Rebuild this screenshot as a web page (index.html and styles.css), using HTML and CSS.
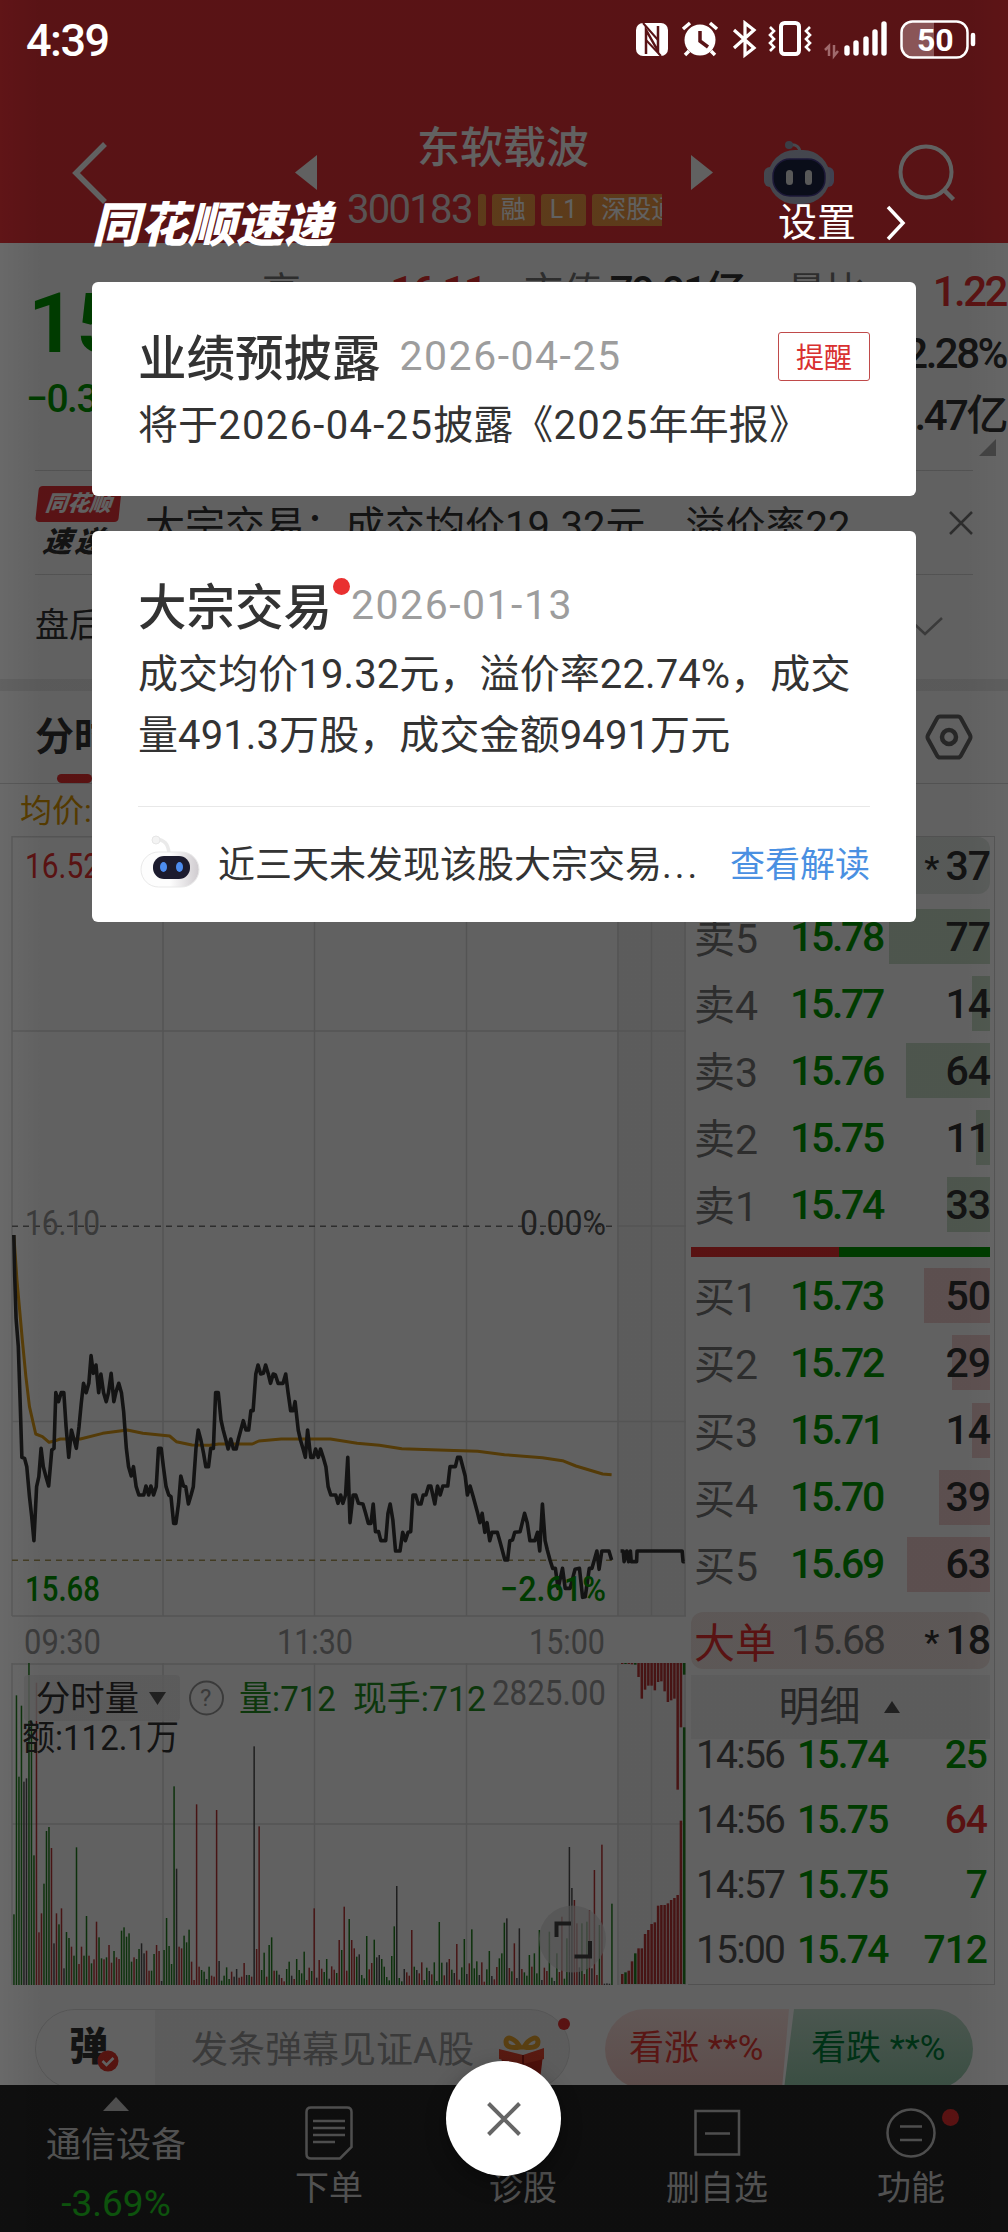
FILE: index.html
```html
<!DOCTYPE html>
<html lang="zh-CN">
<head>
<meta charset="UTF-8">
<meta name="viewport" content="width=device-width, initial-scale=1.0">
<title>东软载波 300183</title>
<link rel="stylesheet" href="styles.css">
</head>
<body>
<div class="page">
    <header class="header">
        <svg class="back" width="38" height="62" viewBox="0 0 38 62"><path d="M34 2L5 31l29 29" fill="none" stroke="#fff" stroke-width="5.5"/></svg>
        <svg class="prev" width="22" height="35" viewBox="0 0 22 35"><path d="M22 0v35L0 17.500z" fill="#fff"/></svg>
        <div class="stock">
            <div class="stock-name">东软载波</div>
            <div class="stock-code"><span class="code">300183</span><i class="tag tag-thin"></i><i class="tag">融</i><i class="tag">L1</i><i class="tag">深股通</i></div>
        </div>
        <svg class="next" width="22" height="35" viewBox="0 0 22 35"><path d="M0 0v35l22-17.500z" fill="#fff"/></svg>
        <svg class="robot" width="70" height="64" viewBox="0 0 70 64">
            <path d="M26 4c6-1 10 2 10 8" fill="none" stroke="#b9c0d0" stroke-width="3"/>
            <circle cx="25" cy="4" r="4" fill="#9aa3b8"/>
            <rect x="0" y="26" width="12" height="20" rx="6" fill="#b4bace"/>
            <rect x="58" y="26" width="12" height="20" rx="6" fill="#a9acd4"/>
            <rect x="4" y="9" width="62" height="54" rx="27" fill="#b3b9cc"/>
            <rect x="9" y="18" width="52" height="37" rx="17" fill="#1a2142" stroke="#4a3f93" stroke-width="1.500"/>
            <rect x="22" y="29" width="7" height="15" rx="3.500" fill="#e8e8e8"/>
            <rect x="41" y="29" width="7" height="15" rx="3.500" fill="#e8e8e8"/>
        </svg>
        <svg class="search" width="60" height="60" viewBox="0 0 60 60"><circle cx="28" cy="29" r="25.500" fill="none" stroke="#fff" stroke-width="4"/><path d="M46 47l9.500 9.500" stroke="#fff" stroke-width="4.500"/></svg>
    </header>

    <section class="quote">
        <div class="price-box">
            <div class="price">15.76</div>
            <div class="change">−0.34</div>
        </div>
        <div class="stats">
            <span>高</span><b class="red">16.11</b>
            <span class="c3">市值</span><b>79.91亿</b>
            <span class="c5">量比</span><b class="red">1.22</b>
            <b class="last">2.28%</b>
            <b class="last">3.47亿</b>
        </div>
        <i class="corner"></i>
    </section>

    <section class="news">
        <div class="news-logo"><b>同花顺</b><em>速递</em></div>
        <div class="news-text">大宗交易：成交均价19.32元，溢价率22</div>
        <svg width="24" height="24" viewBox="0 0 24 24"><path d="M1 1l22 22M23 1L1 23" stroke="#777" stroke-width="2.500"/></svg>
    </section>
    <section class="after">
        <span>盘后</span>
        <svg width="36" height="20" viewBox="0 0 36 20"><path d="M1 1l17 16L35 1" fill="none" stroke="#999" stroke-width="2.500"/></svg>
    </section>
    <section class="tabs">
        <span class="tab">分时</span>
        <svg width="48" height="46" viewBox="0 0 48 46" fill="none" stroke="#666"><path d="M15 2.500h18q2 0 3 2L45 21q1 2 0 4l-9 16.500q-1 2-3 2H15q-2 0-3-2L3 25q-1-2 0-4l9-16.500q1-2 3-2z" stroke-width="4"/><circle cx="24" cy="23" r="7" stroke-width="4.500"/></svg>
    </section>
    <div class="avg">均价:</div>

    <main class="main">
        <svg class="chart" width="688" height="1149" viewBox="0 836 688 1149">
            <rect x="617" y="836" width="69" height="780" fill="#f2f2f2"/>
            <rect x="617" y="1663" width="69" height="322" fill="#f2f2f2"/>
            <g fill="none" stroke="#dcdcdc" stroke-width="1.500">
                <path d="M12 836.700h674M12 1031h674M617 1226h69M12 1421.500h674M12 1616h674M12 1664h674M12 1824h674"/>
                <path d="M12 836v780M163 836v780M314.500 836v780M466.500 836v780M618 836v780M651.500 836v780M685 836v780"/>
                <path d="M12 1663v322M163 1663v322M314.500 1663v322M466.500 1663v322M618 1663v322M651.500 1663v322M685 1663v322"/>
            </g>
            <path d="M12 1226.300h605" stroke="#777" stroke-width="1.500" stroke-dasharray="6 5"/>
            <path d="M12 1560.300h605" stroke="#ac9a5c" stroke-width="1.500" stroke-dasharray="6 5"/>
            <g class="lines" transform="translate(0 1200) scale(.44643 .33333)">
                <polyline class="line-avg" points="31,105 38,240 44,330 50,420 58,530 66,620 80,702 95,710 110,727 120,724 135,717 180,717 230,700 285,690 320,700 380,708 395,725 430,735 470,736 490,732 565,732 580,723 630,717 740,717 800,730 850,736 900,746 1000,751 1070,754 1130,764 1215,773 1260,782 1290,798 1350,822 1370,824"/>
                <polyline class="line-price" points="31,105 33,230 36,355 41,440 45,600 49,772 55,775 60,800 66,890 71,950 76,1022 82,860 87,830 92,745 97,800 103,830 109,858 116,750 121,745 125,578 131,605 137,578 143,578 148,680 154,772 160,690 166,720 171,745 177,680 182,610 187,550 193,578 199,550 204,467 209,520 215,495 221,578 226,522 232,578 238,605 243,578 249,520 255,605 260,575 266,550 272,578 277,635 283,745 288,800 294,828 299,800 305,860 311,885 322,885 327,858 333,885 338,858 344,885 350,860 355,745 361,745 366,800 372,860 378,885 383,890 389,970 394,970 400,910 405,828 411,858 416,860 422,912 428,885 433,860 439,745 444,690 450,720 456,760 461,800 467,800 472,745 478,745 483,578 489,578 495,660 500,690 506,720 511,747 517,717 523,747 529,747 534,717 545,662 551,690 557,690 562,632 567,632 573,522 578,495 584,522 590,520 595,495 601,522 606,550 612,522 617,525 623,550 634,550 640,522 645,575 651,632 657,632 661,605 668,690 673,720 679,747 684,772 689,690 696,772 702,772 707,747 713,772 718,747 724,772 730,800 735,860 741,885 752,885 757,910 763,885 768,910 774,885 779,772 784,968 791,885 797,885 803,910 813,912 819,940 825,970 831,970 836,912 841,995 848,995 853,1022 864,1022 869,940 874,912 880,960 886,1053 896,1053 902,997 908,1022 914,997 920,995 925,885 931,885 937,912 943,912 948,885 954,885 960,858 965,858 974,912 980,858 986,885 992,858 1003,858 1008,800 1020,800 1025,772 1031,772 1042,828 1047,885 1053,858 1060,890 1070,940 1075,968 1080,940 1086,997 1091,968 1097,1022 1102,997 1114,997 1120,1025 1131,1080 1137,1080 1142,1022 1148,1020 1153,997 1165,995 1175,940 1181,968 1187,1022 1198,1022 1204,997 1209,1053 1215,912 1221,1022 1226,1050 1232,1080 1238,1105 1244,1105 1250,1165 1255,1135 1260,1105 1266,1165 1277,1165 1288,1108 1298,1105 1305,1192 1311,1190 1320,1105 1326,1105 1337,1053 1342,1108 1348,1053 1364,1053 1370,1080"/>
                <polyline class="line-price" points="1390,1053 1396,1053 1398,1085 1404,1053 1408,1085 1412,1053 1414,1085 1426,1085 1427,1053 1528,1053 1530,1085 1534,1085"/>
            </g>
            <g class="label">
                <text class="up" x="25" y="878" textLength="75" lengthAdjust="spacingAndGlyphs">16.52</text>
                <text class="dim" x="25" y="1235" textLength="75" lengthAdjust="spacingAndGlyphs">16.10</text>
                <text class="grey" x="520" y="1235" textLength="86" lengthAdjust="spacingAndGlyphs">0.00%</text>
                <text class="down" x="25" y="1601" textLength="75" lengthAdjust="spacingAndGlyphs">15.68</text>
                <text class="down" x="500" y="1601" textLength="106" lengthAdjust="spacingAndGlyphs">−2.61%</text>
                <text class="dim" x="24" y="1654" textLength="77" lengthAdjust="spacingAndGlyphs">09:30</text>
                <text class="dim" x="277" y="1654" textLength="76" lengthAdjust="spacingAndGlyphs">11:30</text>
                <text class="dim" x="529" y="1654" textLength="76" lengthAdjust="spacingAndGlyphs">15:00</text>
            </g>
            <g id="volume"></g>
            <rect x="24" y="1675" width="156" height="46" rx="4" fill="#ececec" fill-opacity=".8"/>
            <path d="M149 1692h17l-8.500 13z" fill="#555"/>
            <circle cx="206.500" cy="1698" r="16.500" fill="none" stroke="#999" stroke-width="2"/>
            <g class="label">
                <text class="ink" x="36" y="1711" textLength="103" lengthAdjust="spacingAndGlyphs">分时量</text>
                <text class="dim mark" x="200" y="1706">?</text>
                <text class="vol" x="239" y="1711" textLength="97" lengthAdjust="spacingAndGlyphs">量:712</text>
                <text class="vol" x="353" y="1711" textLength="133" lengthAdjust="spacingAndGlyphs">现手:712</text>
                <text class="dim" x="492" y="1705" textLength="114" lengthAdjust="spacingAndGlyphs">2825.00</text>
                <text class="ink" x="22" y="1750" textLength="157" lengthAdjust="spacingAndGlyphs">额:112.1万</text>
            </g>
            <circle cx="572.500" cy="1939" r="33.500" fill="#ddd" fill-opacity=".7"/>
            <path d="M556.500 1937v-13.500H571M590 1941v15.500h-15.500" fill="none" stroke="#444" stroke-width="4"/>
        </svg>

        <aside class="book">
            <div class="big green-bg"><span></span><em></em><b><small>*</small>37</b></div>
            <div class="orders" id="sells"></div>
            <div class="ratio"><i></i></div>
            <div class="orders buys" id="buys"></div>
            <div class="big"><span>大单</span><em>15.68</em><b><small>*</small>18</b></div>
            <div class="detail-head">明细<i></i></div>
            <div class="ticks">
                <div><span>14:56</span><em>15.74</em><b>25</b></div>
                <div><span>14:56</span><em>15.75</em><b class="red">64</b></div>
                <div><span>14:57</span><em>15.75</em><b>7</b></div>
                <div><span>15:00</span><em>15.74</em><b>712</b></div>
            </div>
        </aside>
    </main>

    <section class="danmu">
        <div class="danmu-input">
            <div class="danmu-switch"><b>弹</b><svg width="22" height="22" viewBox="0 0 22 22"><circle cx="11" cy="11" r="10.500" fill="#e0352b"/><path d="M5.500 11l4 4 7-7" fill="none" stroke="#fff" stroke-width="2.500"/></svg></div>
            <div class="danmu-text">发条弹幕见证A股</div>
            <svg class="gift" width="50" height="54" viewBox="0 0 50 54">
                <path d="M4 21h42l-4 33H8z" fill="#c92a1c"/>
                <path d="M2 15l24 6 21-7v11l-21 5L2 25z" fill="#e8452e"/>
                <path d="M26 21v33" stroke="#a01a12" stroke-width="2"/>
                <path d="M23 13c-5-9-14-12-14-5 0 6 8 6 14 5zm4 0c5-9 14-12 14-5 0 6-8 6-14 5z" fill="none" stroke="#e9a52e" stroke-width="5"/>
            </svg>
            <i class="dot"></i>
        </div>
        <div class="vote">
            <div class="vote-up">看涨 **%</div>
            <div class="vote-down">看跌 **%</div>
        </div>
    </section>

    <nav class="nav">
        <div class="nav-item sector">
            <svg width="26" height="14" viewBox="0 0 26 14"><path d="M13 0l13 14H0z" fill="#ccc"/></svg>
            <span>通信设备</span>
            <b>-3.69%</b>
        </div>
        <div class="nav-item">
            <svg width="48" height="54" viewBox="0 0 48 54" fill="none" stroke="#ccc" stroke-width="2.500"><path d="M6 1.500h36q4.500 0 4.500 4.500v35L35 52.500H6Q1.500 52.500 1.500 48V6Q1.500 1.500 6 1.500z"/><path d="M8 15h32M8 22h32M8 29h32M8 36h22"/></svg>
            <span>下单</span>
        </div>
        <div class="nav-item"><svg width="48" height="54"></svg><span>诊股</span></div>
        <div class="nav-item">
            <svg width="48" height="54" viewBox="0 0 48 54" fill="none" stroke="#ccc" stroke-width="2.500"><path d="M2.500 5h43.500v43.500H2.500zM12 27.500h25"/></svg>
            <span>删自选</span>
        </div>
        <div class="nav-item">
            <svg width="50" height="54" viewBox="0 0 50 54" fill="none" stroke="#ccc" stroke-width="2.500"><circle cx="25" cy="27" r="23.500"/><path d="M14 20.500h22M14 34h22"/></svg>
            <i class="dot"></i>
            <span>功能</span>
        </div>
    </nav>
</div>

<div class="mask"></div>

<div class="layer">
    <div class="status">
        <span class="time">4:39</span>
        <svg width="346" height="40" viewBox="0 0 346 40" fill="none" stroke="#fff">
            <rect x="4" y="3" width="32" height="33" rx="7" fill="#fff" stroke="none"/>
            <path d="M14 34V10L26 31V6" stroke="#591316" stroke-width="2.500"/><path d="M11 3l15 17M29 36L14 20" stroke="#591316" stroke-width="2"/>
            <circle cx="68" cy="20" r="15.500" fill="#fff" stroke="none"/>
            <path d="M51 9l7-6M85 9l-7-6M57 31l-4 4M79 31l4 4" stroke-width="3.500"/>
            <path d="M68 11v10l8 6" stroke="#591316" stroke-width="3.500"/>
            <path d="M102 10l20 18-9 7V3l9 7-20 18" stroke-width="3.200"/>
            <rect x="149" y="3" width="18" height="31" rx="3.500" stroke-width="4"/>
            <path d="M138 7l4 4-4 4 4 4-4 4 4 4-4 4M178 7l-4 4 4 4-4 4 4 4-4 4 4 4" stroke-width="2.600"/>
            <path d="M193 30l4-4v10M206 31l-4 5V25" stroke="#a06a6c" stroke-width="2.500"/>
            <path d="M215 28v5M224 23v10M234 19v14M243 12v21M252 4v29" stroke-width="5.400" stroke-linecap="round"/>
            <path d="M280 2h22v35h-22q-10 0-10-10V12q0-10 10-10z" fill="#8a5557" stroke="none"/>
            <rect x="269.500" y="1.500" width="66" height="36" rx="11" stroke-width="2.500"/>
            <path d="M341 15v9" stroke-width="4.500" stroke-linecap="round"/>
            <text class="battery" x="285" y="31">50</text>
        </svg>
    </div>
    <div class="modal-head">
        <h1>同花顺速递</h1>
        <a class="setting">设置<svg width="24" height="36" viewBox="0 0 24 36"><path d="M4 2l15 16L4 34" fill="none" stroke="#fff" stroke-width="3.500"/></svg></a>
    </div>
    <article class="card">
        <div class="card-head">
            <h2>业绩预披露</h2>
            <time>2026-04-25</time>
            <button class="remind">提醒</button>
        </div>
        <p>将于<span class="date">2026-04-25</span>披露《<span class="date">2025</span>年年报》</p>
    </article>
    <article class="card card-trade">
        <div class="card-head">
            <h2>大宗交易<i class="dot"></i></h2>
            <time>2026-01-13</time>
        </div>
        <p>成交均价19.32元，溢价率22.74%，成交<br>量491.3万股，成交金额9491万元</p>
        <div class="card-foot">
            <svg width="62" height="56" viewBox="0 0 62 56">
                <defs><linearGradient id="head" x1="0" x2="1"><stop offset=".5" stop-color="#fdfdfd"/><stop offset="1" stop-color="#cfcbcf"/></linearGradient></defs>
                <path d="M18 5c9 1 12 5 13 14" fill="none" stroke="#eaeaea" stroke-width="3.500"/>
                <circle cx="18" cy="6" r="4" fill="#f3f3f3" stroke="#e6e6e6"/>
                <rect x="3" y="18" width="58" height="35" rx="17.500" fill="url(#head)" stroke="#e9e9e9"/>
                <rect x="15" y="22" width="37" height="23" rx="11" fill="#1c1b2e"/>
                <ellipse cx="25.500" cy="33" rx="3.500" ry="5" fill="#4d8df0"/>
                <ellipse cx="41.500" cy="33" rx="3.500" ry="5" fill="#4d8df0"/>
            </svg>
            <span class="foot-text">近三天未发现该股大宗交易<span class="dots">...</span></span>
            <a>查看解读</a>
        </div>
    </article>
    <button class="close"><svg width="34" height="34" viewBox="0 0 34 34"><path d="M1.500 1.500l31 31M32.500 1.500l-31 31" stroke="#666" stroke-width="4"/></svg></button>
</div>
<script src="app.js"></script>
</body>
</html>
```

FILE: styles.css
```css
* {
    box-sizing: border-box;
}
body {
    margin: 0;
    position: relative;
    width: 1008px;
    height: 2232px;
    overflow: hidden;
    font-family: Roboto, "Noto Sans CJK SC", sans-serif;
    color: #333;
    background: #fff;
}
h1, h2, p {
    margin: 0;
}
i, em {
    font-style: normal;
}
svg {
    display: block;
    flex: none;
}
.red {
    color: #e93030 !important;
}
.dot {
    display: block;
    border-radius: 50%;
    background: #e93030;
}

/* header */
.header {
    display: flex;
    align-items: center;
    height: 243px;
    padding: 102px 0 0 71px;
    background: #e93238;
    color: #fff;
}
.prev {
    margin-left: 186px;
}
.stock {
    width: 315px;
    margin-left: 30px;
    padding-top: 13px;
}
.stock-name {
    width: 315px;
    padding-left: 70px;
    font-size: 43px;
    font-weight: 500;
    line-height: 62px;
    white-space: nowrap;
}
.stock-code {
    display: flex;
    align-items: center;
    gap: 6px;
    overflow: hidden;
    font-size: 40px;
    line-height: 62px;
}
.code {
    width: 130px;
    letter-spacing: -1.7px;
    color: #eadada;
}
.tag {
    flex: none;
    height: 32px;
    padding: 0 9px;
    border-radius: 3px;
    background: #f39a45;
    font-size: 25px;
    line-height: 32px;
}
.tag-thin {
    width: 8px;
    padding: 0;
}
.next {
    margin-left: 29px;
}
.robot {
    margin-left: 51px;
}
.search {
    margin-left: 64px;
}

/* quote */
.quote {
    position: relative;
    display: flex;
    height: 228px;
    margin: 0 2px 0 26px;
    padding-top: 18px;
}
.quote::after {
    content: "";
    position: absolute;
    left: 9px;
    right: 33px;
    bottom: 0;
    height: 1px;
    background: #d8d8d8;
}
.price-box {
    width: 236px;
    color: #009a00;
    padding-top: 13px;
}
.price {
    font-size: 84px;
    line-height: 100px;
    font-weight: 600;
    padding-left: 2px;
}
.change {
    font-size: 39px;
    line-height: 50px;
    letter-spacing: -1.5px;
    font-weight: 500;
}
.stats {
    flex: 1;
    display: grid;
    grid-template-columns: 80px 143px 118px 141px 120px 1fr;
    grid-auto-rows: 62px;
    align-items: center;
    font-size: 39px;
    line-height: 62px;
    white-space: nowrap;
    color: #777;
}
.stats b {
    font-weight: 500;
    font-size: 42px;
    letter-spacing: -2.5px;
    text-align: right;
    color: #333;
}
.stats .c3 {
    padding-left: 39px;
}
.stats .c5 {
    padding-left: 43px;
}
.stats .last {
    grid-column: 6;
}
.corner {
    position: absolute;
    right: 10px;
    top: 196px;
    border-left: 17px solid transparent;
    border-bottom: 17px solid #aaa;
}

/* news rows */
.news, .after {
    display: flex;
    align-items: center;
    height: 104px;
    margin: 0 35px;
    border-bottom: 1px solid #d8d8d8;
}
.news-logo {
    width: 83px;
    align-self: flex-start;
    margin-top: 15px;
    transform: skewX(-6deg);
}
.news-logo b {
    display: block;
    height: 36px;
    border-radius: 4px;
    background: #e93238;
    color: #fff;
    font-size: 22px;
    font-weight: 900;
    font-style: italic;
    line-height: 36px;
    text-align: center;
}
.news-logo em {
    display: block;
    padding-left: 10px;
    font-size: 29px;
    font-weight: 900;
    font-style: italic;
    letter-spacing: 3px;
    line-height: 40px;
    white-space: nowrap;
}
.news-text {
    flex: 1;
    padding-left: 27px;
    font-size: 40px;
}
.after {
    height: 104px;
    padding-right: 30px;
    justify-content: space-between;
    border-bottom: 0;
    font-size: 34px;
    line-height: 100px;
}
.after span {
    margin-top: -4px;
}
.tabs {
    display: flex;
    align-items: center;
    justify-content: space-between;
    height: 105px;
    padding: 0 35px;
    border-top: 12px solid #ebebeb;
    border-bottom: 1px solid #d8d8d8;
}
.tab {
    position: relative;
    font-size: 39px;
    font-weight: 700;
    line-height: 90px;
}
.tab::after {
    content: "";
    position: absolute;
    left: 22px;
    bottom: -1px;
    width: 35px;
    height: 9px;
    border-radius: 5px;
    background: #e93030;
}
.avg {
    height: 52px;
    padding-left: 20px;
    font-size: 32px;
    line-height: 54px;
    color: #dc9800;
}

/* chart */
.main {
    display: flex;
    height: 1149px;
}
.lines polyline {
    fill: none;
    stroke-width: 3.6;
    stroke-linejoin: round;
    vector-effect: non-scaling-stroke;
}
.lines .line-avg {
    stroke: #dc9a14;
    stroke-width: 3;
}
.line-price {
    stroke: #333;
}
.label {
    font-size: 35px;
}
.label .up {
    fill: #e93030;
}
.label .down {
    fill: #009a00;
    font-weight: 500;
}
.label .vol {
    fill: #22901f;
}
.label .dim {
    fill: #999;
}
.label .mark {
    font-size: 24px;
}
.label .grey {
    fill: #555;
}
.label .ink {
    fill: #333;
}

/* order book */
.book {
    width: 307px;
    padding-right: 4px;
    padding-left: 3px;
    border: 1px solid #d5d5d5;
    border-left: 0;
}
.big {
    display: flex;
    align-items: center;
    height: 57px;
    padding-left: 3px;
    border-radius: 12px;
    background: #f3e6e3;
    font-size: 41px;
    white-space: nowrap;
}
.green-bg {
    background: #e4ebe6;
}
.big span {
    width: 97px;
    color: #e93030;
}
.big em {
    color: #777;
    letter-spacing: -2px;
}
.big b {
    margin-left: auto;
    font-weight: 500;
    letter-spacing: -1px;
}
.big small {
    font-size: 34px;
    margin-right: 7px;
}
.orders {
    display: grid;
    grid-auto-rows: 55px;
    row-gap: 12.1px;
    padding-top: 15px;
}
.buys {
    padding: 11px 0 20px;
}
.order {
    display: flex;
    align-items: center;
    position: relative;
    padding-left: 3px;
    font-size: 41px;
    white-space: nowrap;
}
.order i {
    position: absolute;
    right: 0;
    top: 0;
    height: 55px;
    background: #cbe0ca;
}
.buys .order i {
    background: #f2d0d0;
}
.order span {
    width: 96px;
    margin-top: -3px;
    color: #777;
    font-size: 41px;
}
.order em {
    color: #009a00;
    font-weight: 500;
    letter-spacing: -2.3px;
}
.order b {
    position: relative;
    margin-left: auto;
    font-weight: 500;
    letter-spacing: -1px;
}
.ratio {
    height: 10px;
    margin-top: 15px;
    background: #009a00;
}
.ratio i {
    display: block;
    width: 148px;
    height: 10px;
    background: #e93030;
}
.detail-head {
    display: flex;
    align-items: center;
    justify-content: center;
    gap: 23px;
    height: 64px;
    margin-top: 6px;
    padding-right: 3px;
    background: #f2f2f2;
    color: #666;
    font-size: 41px;
    line-height: 58px;
}
.detail-head i {
    border: 8px solid transparent;
    border-top: 0;
    border-bottom: 12px solid #555;
}
.ticks div {
    display: flex;
    align-items: center;
    height: 65px;
    padding: 0 3px 0 5px;
    font-size: 39px;
    letter-spacing: -1.8px;
}
.ticks {
    margin-top: -16px;
}
.ticks span {
    width: 101px;
    color: #555;
}
.ticks em, .ticks b {
    color: #009a00;
    font-weight: 500;
}
.ticks b {
    margin-left: auto;
    letter-spacing: -1px;
}

/* danmu bar */
.danmu {
    display: flex;
    justify-content: space-between;
    height: 100px;
    padding: 24px 35px 0;
    overflow: hidden;
}
.danmu-input {
    position: relative;
    display: flex;
    width: 535px;
    height: 80px;
    border: 1px solid #e0e0e0;
    border-radius: 40px;
    background: #f2f2f2;
}
.danmu-switch {
    position: relative;
    width: 119px;
    border-radius: 40px 0 0 40px;
    background: #fff;
    padding-left: 33px;
    font-size: 39px;
    line-height: 74px;
}
.danmu-switch b {
    font-weight: 900;
}
.danmu-switch svg {
    position: absolute;
    left: 61px;
    top: 40px;
}
.danmu-text {
    padding-left: 36px;
    font-size: 37px;
    line-height: 82px;
    color: #999;
}
.gift {
    position: absolute;
    right: 22px;
    top: 24px;
}
.danmu-input .dot {
    position: absolute;
    right: -1px;
    top: 8px;
    width: 12px;
    height: 12px;
}
.vote {
    display: flex;
    width: 368px;
    height: 80px;
    border-radius: 40px;
    overflow: hidden;
    font-size: 35px;
    line-height: 80px;
    white-space: nowrap;
}
.vote-up {
    width: 186px;
    padding-left: 24px;
    background: linear-gradient(#ffe6e2, #f3c8c4);
    clip-path: polygon(0 0, 100% 0, 177px 100%, 0 100%);
    color: #e93a34;
}
.vote-down {
    width: 191px;
    margin-left: -5px;
    padding-left: 27px;
    background: linear-gradient(#c4e2d0, #98cdae);
    clip-path: polygon(10px 0, 100% 0, 100% 100%, 0 100%);
    color: #00823a;
}

/* bottom nav */
.nav {
    display: flex;
    height: 147px;
    padding-left: 0;
    background: #252525;
    color: #d5d5d5;
    font-size: 34px;
}
.nav-item {
    position: relative;
    display: flex;
    flex-direction: column;
    align-items: center;
    width: 194px;
    padding-top: 21px;
    line-height: 56px;
}
.nav-item .dot {
    position: absolute;
    left: 128px;
    top: 24px;
    width: 17px;
    height: 17px;
}
.nav .sector {
    width: 232px;
    padding-top: 12px;
}
.sector span {
    line-height: 68px;
    margin-top: 1px;
    font-size: 35px;
}
.sector b {
    margin-top: 1px;
    font-size: 37px;
    font-weight: 400;
    line-height: 46px;
    color: #21d821;
}

/* mask and layer above it */
.mask {
    position: absolute;
    inset: 0;
    background: linear-gradient(90deg, rgba(0, 0, 0, .59), rgba(0, 0, 0, .62) 4%, rgba(0, 0, 0, .62) 96%, rgba(0, 0, 0, .6));
}
.layer {
    position: absolute;
    inset: 0;
    padding: 0 92px;
}
.status {
    display: flex;
    justify-content: space-between;
    align-items: center;
    height: 80px;
    margin: 0 -57px 0 -66px;
    color: #fff;
}
.status svg {
    margin-right: -5px;
}
.time {
    font-size: 45px;
    font-weight: 500;
    letter-spacing: -1.5px;
}
.battery {
    font-size: 32px;
    font-weight: 700;
    fill: #fff;
    stroke: none;
}
.modal-head {
    display: flex;
    justify-content: space-between;
    height: 202px;
    padding: 114px 8px 0 0;
    color: #fff;
}
.modal-head h1 {
    font-size: 48px;
    font-weight: 900;
    font-style: italic;
    line-height: 64px;
}
.setting {
    display: flex;
    align-items: center;
    gap: 28px;
    height: 58px;
    font-size: 39px;
    line-height: 54px;
}
.card {
    height: 214px;
    padding: 40px 46px 0;
    border-radius: 6px;
    background: #fff;
}
.card-head {
    display: flex;
    align-items: center;
    height: 68px;
}
.card h2 {
    position: relative;
    top: -1px;
    font-size: 48.500px;
    font-weight: 500;
    white-space: nowrap;
}
.card time {
    margin-left: 19px;
    font-size: 41px;
    letter-spacing: 1.5px;
    color: #9d9d9d;
}
.remind {
    width: 92px;
    height: 49px;
    margin-left: auto;
    padding: 0;
    border: 1.500px solid #c04a4a;
    border-radius: 3px;
    background: #fff;
    color: #d93030;
    font: 28px Roboto, "Noto Sans CJK SC", sans-serif;
}
.card p {
    font-size: 40px;
    letter-spacing: .1px;
    line-height: 61px;
    padding-top: 5px;
    white-space: nowrap;
}
.date {
    letter-spacing: 1.3px;
}
.card-trade {
    height: 391px;
    margin-top: 35px;
}
.card-trade .dot {
    position: absolute;
    right: -18px;
    top: 9px;
    width: 17px;
    height: 17px;
}
.card-foot {
    display: flex;
    align-items: center;
    margin-top: 40px;
    border-top: 1px solid #e8e8e8;
    height: 110px;
    font-size: 37px;
}
.foot-text {
    margin-left: 18px;
    white-space: nowrap;
}
.dots {
    letter-spacing: 3px;
}
.card-foot a {
    margin-left: auto;
    font-size: 35px;
    color: #4a90e2;
}
.close {
    position: absolute;
    left: 446px;
    top: 2061px;
    display: flex;
    align-items: center;
    justify-content: center;
    width: 115px;
    height: 115px;
    padding: 0;
    border: 0;
    border-radius: 50%;
    background: #fff;
    box-shadow: 0 8px 20px rgba(0, 0, 0, .35);
}
```

FILE: app.js
```js
const NS = 'http://www.w3.org/2000/svg';
const COLORS = { g: '#22801f', r: '#bb3535', k: '#505050' };

// order book
const sells = [['卖5', '15.78', 77], ['卖4', '15.77', 14], ['卖3', '15.76', 64], ['卖2', '15.75', 11], ['卖1', '15.74', 33]];
const buys = [['买1', '15.73', 50], ['买2', '15.72', 29], ['买3', '15.71', 14], ['买4', '15.70', 39], ['买5', '15.69', 63]];

function renderOrders(id, rows) {
    document.getElementById(id).innerHTML = rows.map(([name, price, count]) =>
        `<div class="order"><i style="width:${Math.round(count * 1.31)}px"></i><span>${name}</span><em>${price}</em><b>${count}</b></div>`
    ).join('');
}

// minute volume, one entry per minute
const open = '212g 869g 625g 838g 610k 620k 966g 795g 389g 907r 158r 215r 304g 462g 474g 411r 125k 215r 182g 230r 50k 159g 141g 115r 88g 413g 63r 115r 88g 207g 88r 65g 77r 190r 143g 80g 77r 83g 120r 67r 102g 83r 78r 163g 173g 145g 155g 70g 83r 78g 108g 125k 95k 103r 43r 43g 93g 120r 102r 12k 105g 201g 117g 63g 596g 349k 115r 110r 148g 128g 166g 70r 15r 542r 55r 45g 40g 18k 55g 28r 25r 525r 72k 13g 28g 53g 18g 40r 25k 48k 22r 25r 66r 30k 30g 25r 716k 108r 476r 45g 97g 25r 120g 143g 43r 43g'.split(' ');
const peaks = {
    110: '70g', 113: '78g', 116: '100g', 120: '230r', 122: '75r', 125: '78g', 130: '135r', 131: '105g', 132: '235r', 134: '198g',
    135: '135r', 136: '110r', 137: '85g', 138: '92k', 141: '147g', 143: '66r', 144: '136g', 145: '83k', 146: '90k', 147: '78g', 148: '55g',
    151: '87g', 152: '176g', 153: '297k', 159: '165r', 163: '68r', 168: '68g', 170: '189g', 171: '67g', 173: '68k', 174: '78r',
    177: '123r', 180: '138g', 182: '65r', 183: '167g', 185: '71g', 187: '68r', 190: '102g', 194: '80g', 195: '95g', 196: '187g', 197: '200k',
    200: '125r', 202: '170k', 206: '90g', 208: '95g', 210: '165g', 214: '160g', 217: '95g', 219: '205r', 221: '140g', 222: '414k',
    223: '291k', 224: '255r', 225: '185r', 227: '185g', 229: '190g', 230: '225r', 232: '345r', 234: '180g', 235: '421r', 237: '5k', 239: '244g'
};
const auctionBottom = [30, 35, 40, 68, 92, 107, 107, 150, 162, 180, 185, 235, 237, 237, 242, 252, 258, 267, 490, 770];
const auctionTop = [3, 3, 3, 4, 5, 42, 107, 80, 68, 68, 82, 57, 55, 85, 117, 112, 107, 380, 193, 35];

function bar(x, y, width, height, color) {
    const rect = document.createElementNS(NS, 'rect');
    rect.setAttribute('x', x);
    rect.setAttribute('y', y);
    rect.setAttribute('width', width);
    rect.setAttribute('height', height);
    rect.setAttribute('fill', COLORS[color]);
    document.getElementById('volume').appendChild(rect);
}

function renderVolume() {
    for (let i = 0; i < 240; i++) {
        const small = 10 + (i * 37 % 47) + 'grkgr'[i * 7 % 5];
        const item = open[i] || peaks[i] || (i > 235 ? '4k' : small);
        const height = parseInt(item, 10) / 3;
        bar(13.2 + i * 2.502, 1985 - height, 1.5, height, item.slice(-1));
    }
    for (let i = 0; i < 20; i++) {
        const x = 621 + i * 3.26;
        const color = i === 19 || i === 1 || i === 4 ? 'g' : 'r';
        bar(x, 1984 - auctionBottom[i] / 3, 2.5, auctionBottom[i] / 3, color);
        bar(x, 1663, 2.5, auctionTop[i] / 3, color);
    }
}

renderOrders('sells', sells);
renderOrders('buys', buys);
renderVolume();
```
